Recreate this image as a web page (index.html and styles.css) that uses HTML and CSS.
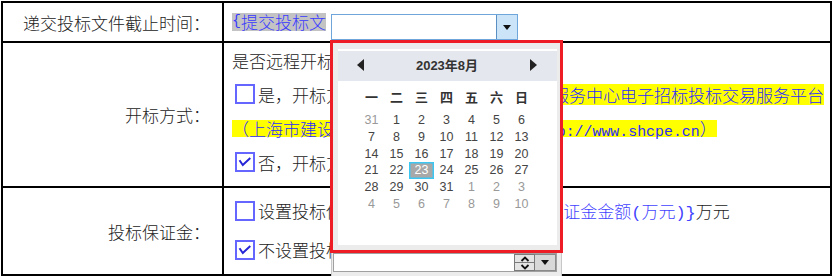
FILE: index.html
```html
<!DOCTYPE html>
<html lang="zh-CN">
<head>
<meta charset="utf-8">
<title>投标设置</title>
<link rel="stylesheet" href="styles.css">
</head>
<body>
<div class="form">
  <div class="label">递交投标文件截止时间：</div>
  <div class="field field-top">
    <span class="hl-gray"><span class="brace-s">{</span>提交投标文</span>
    <div class="date-input"><span class="date-btn"><span class="caret-down"></span></span></div>
  </div>

  <div class="label">开标方式：</div>
  <div class="field lines-open">
    <div class="line">是否远程开标：</div>
    <div class="line"><span class="cb"></span><span>是，开标方式为：</span><span class="hl-yellow hl-tall">上海市建设工程交易服务中心电子招标投标交易服务平台</span></div>
    <div class="line"><span class="hl-yellow hl-short">（上海市建设工程交易服务中心网址：<span class="url"> http://www.shcpe.cn</span>）</span></div>
    <div class="line"><span class="cb"><svg class="tick" viewBox="0 0 16 16"><path d="M2.5 6.2 L5.8 11 L13.3 4"/></svg></span><span>否，开标方式为现场开标。</span></div>
  </div>

  <div class="label">投标保证金：</div>
  <div class="field lines-deposit">
    <div class="line line-tall"><span class="cb"></span><span>设置投标保证金，保证金金额为</span><span class="blue deposit-field"><span class="brace-l">{</span>投标保证金金额<span class="brace-l">(</span>万元<span class="brace-l">)</span><span class="brace-l">}</span></span><span>万元</span></div>
    <div class="line line-tall"><span class="cb"><svg class="tick" viewBox="0 0 16 16"><path d="M2.5 6.2 L5.8 11 L13.3 4"/></svg></span><span>不设置投标保证金</span></div>
  </div>
</div>

<div class="picker">
  <div class="cal">
    <div class="cal-head">
      <span class="tri tri-left"></span>
      <span class="cal-title">2023年8月</span>
      <span class="tri tri-right"></span>
    </div>
    <div class="week">
      <span>一</span><span>二</span><span>三</span><span>四</span><span>五</span><span>六</span><span>日</span>
    </div>
    <div class="days">
      <span class="other">31</span><span>1</span><span>2</span><span>3</span><span>4</span><span>5</span><span>6</span>
      <span>7</span><span>8</span><span>9</span><span>10</span><span>11</span><span>12</span><span>13</span>
      <span>14</span><span>15</span><span>16</span><span>17</span><span>18</span><span>19</span><span>20</span>
      <span>21</span><span>22</span><span class="sel">23</span><span>24</span><span>25</span><span>26</span><span>27</span>
      <span>28</span><span>29</span><span>30</span><span>31</span><span class="other">1</span><span class="other">2</span><span class="other">3</span>
      <span class="other">4</span><span class="other">5</span><span class="other">6</span><span class="other">7</span><span class="other">8</span><span class="other">9</span><span class="other">10</span>
    </div>
  </div>
  <div class="time-input">
    <div class="spin">
      <span class="spin-btn"><svg viewBox="0 0 10 6"><path d="M1.5 5 L5 1.6 L8.5 5"/></svg></span>
      <span class="spin-btn"><svg viewBox="0 0 10 6"><path d="M1.5 1 L5 4.4 L8.5 1"/></svg></span>
    </div>
    <div class="time-btn"><span class="caret-down"></span></div>
  </div>
</div>

<div class="annot"></div>
</body>
</html>
```

FILE: styles.css
```css
html, body {
  margin: 0;
  padding: 0;
  overflow: hidden;
  background: #fff;
}

body {
  position: relative;
  width: 834px;
  height: 276px;
  box-sizing: border-box;
  padding: 1px 0 0 1px;
  font-family: "Noto Sans CJK SC", "Noto Sans", sans-serif;
  font-size: 17px;
  font-weight: 300;
  color: #222;
}

.form {
  width: 831px;
  box-sizing: border-box;
  display: grid;
  grid-template-columns: 219px 606px;
  grid-template-rows: 38px 143px 86px;
  gap: 2px;
  background: #000;
  border: 2px solid #000;
}

.label {
  background: #fff;
  display: flex;
  align-items: center;
  justify-content: flex-end;
  padding-right: 12px;
  white-space: nowrap;
}

.field {
  background: #fff;
  padding-left: 8px;
  overflow: hidden;
}

/* row 1 */
.field-top {
  display: flex;
  align-items: flex-start;
}

.hl-gray {
  display: flex;
  margin-top: 10px;
  height: 18px;
  line-height: 18px;
  background: #c3c3c3;
  color: #3a3aff;
  white-space: nowrap;
}

.brace-s {
  font-family: "Liberation Mono", monospace;
  font-size: 15px;
}

.brace-l {
  font-family: "Liberation Mono", monospace;
  font-size: 17px;
}

.date-input {
  margin: 11px 0 0 5px;
  width: 187px;
  height: 26px;
  box-sizing: border-box;
  border: 1px solid #6ea6dc;
  background: #fff;
  display: flex;
  justify-content: flex-end;
}

.date-btn {
  width: 20px;
  height: 100%;
  background: #cce4f7;
  border-left: 1px solid #5a8fc4;
  display: flex;
  align-items: center;
  justify-content: center;
}

.caret-down {
  width: 0;
  height: 0;
  border-left: 4px solid transparent;
  border-right: 4px solid transparent;
  border-top: 5px solid #111;
}

/* rows 2 and 3 */
.line {
  height: 34px;
  display: flex;
  align-items: center;
  white-space: nowrap;
}

.lines-deposit {
  padding-top: 3px;
}

.line-tall {
  height: 39px;
}

.cb {
  flex: none;
  width: 20px;
  height: 20px;
  box-sizing: border-box;
  margin: 0 3px 0 3px;
  border: 2px solid #6565ff;
  background: #fff;
  position: relative;
}

.tick {
  position: absolute;
  left: 0;
  top: 0;
  width: 16px;
  height: 16px;
  fill: none;
  stroke: #2626d8;
  stroke-width: 2;
}

.hl-yellow {
  display: block;
  background: #ffff00;
  color: #2b2bff;
}

.hl-tall {
  height: 21px;
  line-height: 21px;
  margin-left: 5px;
}

.hl-short {
  height: 17px;
  line-height: 17px;
}

.url {
  font-family: "Liberation Mono", monospace;
  font-size: 14.9px;
}

.blue {
  color: #4242ff;
}

.deposit-field {
  margin-left: 6px;
}

/* date picker popup */
.picker {
  position: absolute;
  left: 331px;
  top: 41px;
  width: 231px;
  height: 240px;
  box-sizing: border-box;
  border: 1px solid #c8c8c8;
  background: #ececec;
}

.cal {
  margin: 7px 0 0 6px;
  width: 219px;
  height: 196px;
  padding-top: 2px;
  box-sizing: border-box;
  background: #fff;
}

.cal-head {
  height: 30px;
  box-sizing: border-box;
  padding: 0 20px 3px 19px;
  background: #e4e7ed;
  display: flex;
  align-items: center;
  justify-content: space-between;
}

.tri {
  width: 0;
  height: 0;
  border-top: 6px solid transparent;
  border-bottom: 6px solid transparent;
}

.tri-left {
  border-right: 7px solid #222;
}

.tri-right {
  border-left: 7px solid #222;
}

.cal-title {
  font-family: "Liberation Sans", "Noto Sans CJK SC", sans-serif;
  font-weight: 700;
  font-size: 13px;
  color: #333;
}

.week, .days {
  display: grid;
  grid-template-columns: repeat(7, 25px);
  margin-left: 21px;
}

.week {
  margin-top: 7px;
  height: 18px;
  line-height: 18px;
  font-size: 13px;
  font-weight: 700;
  color: #333;
  text-align: center;
}

.days {
  margin-top: 6.35px;
  grid-auto-rows: 16.7px;
  font-family: "Liberation Sans", sans-serif;
  font-size: 12.5px;
  font-weight: 400;
  line-height: 16.7px;
  color: #444;
  text-align: center;
}

.days .other {
  color: #999;
}

.days .sel {
  background: #a8a8a8;
  color: #fff;
  box-shadow: inset 0 0 0 1.5px #3cc6f2;
}

.time-input {
  margin: 8px 0 0 1px;
  width: 224px;
  height: 19px;
  box-sizing: border-box;
  border: 1px solid #a0a0a0;
  background: #fff;
  display: flex;
  justify-content: flex-end;
}

.spin {
  width: 21px;
  display: flex;
  flex-direction: column;
}

.spin-btn {
  flex: 1;
  box-sizing: border-box;
  border: 1px solid #7a7a7a;
  background: #e4e4e4;
  display: flex;
  align-items: center;
  justify-content: center;
}

.spin-btn + .spin-btn {
  border-top: none;
}

.spin-btn svg {
  width: 10px;
  height: 6px;
  fill: none;
  stroke: #111;
  stroke-width: 1.8;
}

.time-btn {
  width: 21px;
  box-sizing: border-box;
  border: 1px solid #8a8a8a;
  border-left: none;
  background: #d8d8d8;
  display: flex;
  align-items: center;
  justify-content: center;
}

/* red annotation rectangle */
.annot {
  position: absolute;
  left: 330px;
  top: 40px;
  width: 233px;
  height: 213px;
  box-sizing: border-box;
  border: 3px solid #ee1c25;
  pointer-events: none;
}
```
